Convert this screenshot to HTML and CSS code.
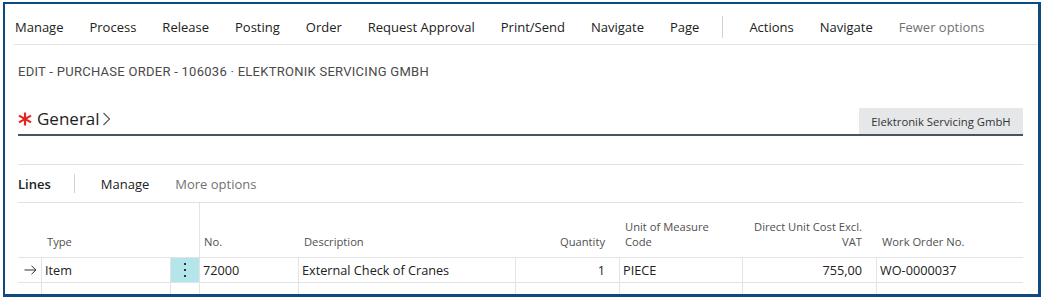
FILE: index.html
```html
<!DOCTYPE html>
<html lang="en">
<head>
<meta charset="utf-8">
<title>Edit - Purchase Order</title>
<link rel="stylesheet" href="styles.css">
</head>
<body>
<div class="frame">
  <nav class="actionbar">
    <span class="act">Manage</span>
    <span class="act">Process</span>
    <span class="act">Release</span>
    <span class="act">Posting</span>
    <span class="act">Order</span>
    <span class="act">Request Approval</span>
    <span class="act">Print/Send</span>
    <span class="act">Navigate</span>
    <span class="act">Page</span>
    <span class="vsep"></span>
    <span class="act">Actions</span>
    <span class="act">Navigate</span>
    <span class="act muted">Fewer options</span>
  </nav>
  <div class="content">
    <div class="page-title">EDIT - PURCHASE ORDER - 106036 · ELEKTRONIK SERVICING GMBH</div>
    <div class="fasttab">
      <div class="fasttab-name">
        <svg class="req" width="14" height="14" viewBox="0 0 14 14"><g stroke="#e3261d" stroke-width="2.2" stroke-linecap="butt"><line x1="7" y1="0.5" x2="7" y2="13.5"/><line x1="1" y1="3.6" x2="13" y2="10.4"/><line x1="1" y1="10.4" x2="13" y2="3.6"/></g></svg>
        <span class="fasttab-label">General</span>
        <svg class="chev" width="9" height="16" viewBox="0 0 9 16"><polyline points="1.5,2 7.5,8 1.5,14" fill="none" stroke="#555" stroke-width="1.1"/></svg>
      </div>
      <div class="summary-btn">Elektronik Servicing GmbH</div>
    </div>
    <div class="fasttab-gap"></div>
    <div class="lines-bar">
      <span class="lines-title">Lines</span>
      <span class="lsep"></span>
      <span class="lact">Manage</span>
      <span class="lact muted">More options</span>
    </div>
    <div class="grid">
      <div class="hc"></div>
      <div class="hc">Type</div>
      <div class="hc"></div>
      <div class="hc line">No.</div>
      <div class="hc">Description</div>
      <div class="hc right">Quantity</div>
      <div class="hc">Unit of Measure<br>Code</div>
      <div class="hc right">Direct Unit Cost Excl.<br>VAT</div>
      <div class="hc">Work Order No.</div>

      <div class="c first"><svg width="13" height="10" viewBox="0 0 13 10"><g fill="none" stroke="#333" stroke-width="1"><line x1="0.5" y1="5" x2="12" y2="5"/><polyline points="7.5,0.8 12,5 7.5,9.2"/></g></svg></div>
      <div class="c">Item</div>
      <div class="c dots"><svg width="4" height="16" viewBox="0 0 4 16"><g fill="#333"><rect x="1" y="1" width="2" height="2"/><rect x="1" y="7" width="2" height="2"/><rect x="1" y="13" width="2" height="2"/></g></svg></div>
      <div class="c">72000</div>
      <div class="c">External Check of Cranes</div>
      <div class="c right">1</div>
      <div class="c">PIECE</div>
      <div class="c right">755,00</div>
      <div class="c">WO-0000037</div>

      <div class="c first"></div>
      <div class="c"></div>
      <div class="c"></div>
      <div class="c"></div>
      <div class="c"></div>
      <div class="c"></div>
      <div class="c"></div>
      <div class="c"></div>
      <div class="c"></div>
    </div>
  </div>
</div>
</body>
</html>
```

FILE: styles.css
```css
html, body {
  margin: 0;
  padding: 0;
  background: #ffffff;
}
body {
  font-family: "Open Sans", "Noto Sans", sans-serif;
  color: #212121;
}
.frame {
  box-sizing: border-box;
  margin: 2px 2px 0 3px;
  width: 1038px;
  height: 295px;
  border-style: solid;
  border-color: #0d4a80;
  border-width: 2px 3px 3px 2px;
  overflow: hidden;
  background: #fff;
}
.actionbar {
  display: flex;
  align-items: center;
  height: 41px;
  box-sizing: border-box;
  padding: 6px 0 0 1px;
  margin-left: 9px;
  border-bottom: 1px solid #e4e4e4;
  font-size: 13px;
}
.act {
  margin-right: 26px;
  white-space: nowrap;
}
.muted {
  color: #727272;
}
.vsep {
  width: 1px;
  height: 22px;
  background: #d2d2d2;
  margin: 0 26px 0 -3px;
}
.content {
  padding: 0 15px 0 13px;
}
.page-title {
  margin-top: 19px;
  font-family: "Roboto", sans-serif;
  font-size: 13px;
  line-height: 16px;
  color: #4a4a4a;
  letter-spacing: 0.27px;
}
.fasttab {
  display: flex;
  justify-content: space-between;
  align-items: flex-end;
  margin-top: 28px;
  height: 26px;
  border-bottom: 2px solid #4a5361;
}
.fasttab-name {
  align-self: flex-start;
  display: flex;
  align-items: center;
  height: 21px;
}
.req {
  margin-right: 5px;
}
.fasttab-label {
  font-size: 17px;
  color: #1e1e1e;
}
.chev {
  margin-left: 2px;
}
.summary-btn {
  width: 164px;
  height: 26px;
  box-sizing: border-box;
  background: #e6e7e9;
  font-size: 11.3px;
  color: #333;
  display: flex;
  align-items: center;
  justify-content: center;
}
.fasttab-gap {
  height: 28px;
  border-bottom: 1px solid #e1e1e1;
}
.lines-bar {
  display: flex;
  align-items: center;
  height: 37px;
  border-bottom: 1px solid #e1e1e1;
  font-size: 13px;
}
.lines-title {
  font-weight: 600;
}
.lsep {
  width: 1px;
  height: 19px;
  background: #d2d2d2;
  margin: 0 26px 0 23px;
}
.lact {
  margin-right: 26px;
}
.grid {
  display: grid;
  grid-template-columns: 23px 129px 29px 99px 217px 104px 123px 134px 147px;
  grid-template-rows: 55px 25px 25px;
}
.hc {
  display: flex;
  flex-direction: column;
  justify-content: flex-end;
  padding: 0 4px 8px 6px;
  font-size: 11.2px;
  line-height: 15px;
  color: #505050;
  border-bottom: 1px solid #e3e3e3;
  white-space: nowrap;
}
.hc.line {
  border-left: 1px solid #e3e3e3;
  padding-left: 4px;
}
.hc.right {
  text-align: right;
  padding-right: 14px;
}
.c {
  box-sizing: border-box;
  border-left: 1px solid #e3e3e3;
  border-bottom: 1px solid #e3e3e3;
  display: flex;
  align-items: center;
  padding: 0 4px 0 3px;
  font-size: 12.7px;
  white-space: nowrap;
}
.c.first {
  border-left: none;
  justify-content: center;
  padding: 0 0 0 2px;
}
.c.right {
  justify-content: flex-end;
  padding-right: 14px;
}
.c.dots {
  background: #b3e5eb;
  justify-content: center;
  padding: 0;
}
```
